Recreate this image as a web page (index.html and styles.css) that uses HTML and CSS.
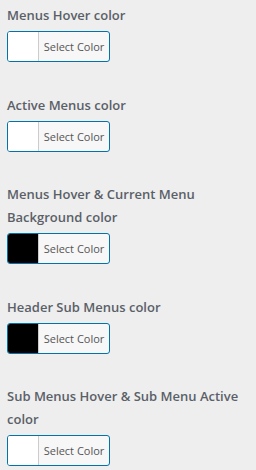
FILE: index.html
```html
<!DOCTYPE html>
<html lang="en">
<head>
    <meta charset="UTF-8">
    <meta name="viewport" content="width=device-width, initial-scale=1.0">
    <title>Menu Colors</title>
    <link rel="stylesheet" href="styles.css">
</head>
<body>
    <div class="settings">
        <div class="field">
            <label class="field-label">Menus Hover color</label>
            <button type="button" class="color-button">
                <span class="swatch swatch-white"></span>
                <span class="button-text">Select Color</span>
            </button>
        </div>

        <div class="field">
            <label class="field-label">Active Menus color</label>
            <button type="button" class="color-button">
                <span class="swatch swatch-white"></span>
                <span class="button-text">Select Color</span>
            </button>
        </div>

        <div class="field">
            <label class="field-label">Menus Hover &amp; Current Menu Background color</label>
            <button type="button" class="color-button">
                <span class="swatch swatch-black"></span>
                <span class="button-text">Select Color</span>
            </button>
        </div>

        <div class="field">
            <label class="field-label">Header Sub Menus color</label>
            <button type="button" class="color-button">
                <span class="swatch swatch-black"></span>
                <span class="button-text">Select Color</span>
            </button>
        </div>

        <div class="field">
            <label class="field-label">Sub Menus Hover &amp; Sub Menu Active color</label>
            <button type="button" class="color-button">
                <span class="swatch swatch-white"></span>
                <span class="button-text">Select Color</span>
            </button>
        </div>
    </div>
</body>
</html>
```

FILE: styles.css
```css
* {
    margin: 0;
    padding: 0;
    box-sizing: border-box;
}

body {
    background-color: #eeeeee;
    font-family: 'Open Sans', 'Noto Sans', sans-serif;
    color: #555d66;
}

.settings {
    display: flex;
    flex-direction: column;
    gap: 31.5px;
    padding: 4px 7px;
}

.field {
    display: flex;
    flex-direction: column;
    align-items: flex-start;
    gap: 4px;
}

.field-label {
    display: block;
    font-size: 13px;
    font-weight: 600;
    line-height: 23px;
    color: #5a6068;
}

.color-button {
    display: flex;
    align-items: stretch;
    width: 103px;
    height: 31px;
    border: 1px solid #0073aa;
    border-radius: 3px;
    background: #f7f7f7;
    overflow: hidden;
    cursor: pointer;
    font-family: inherit;
}

.swatch {
    width: 31px;
    border-right: 1px solid #cccccc;
}

.swatch-white {
    background: #ffffff;
}

.swatch-black {
    background: #000000;
}

.button-text {
    flex: 1;
    display: flex;
    align-items: center;
    justify-content: center;
    font-size: 11px;
    color: #555555;
}
```
